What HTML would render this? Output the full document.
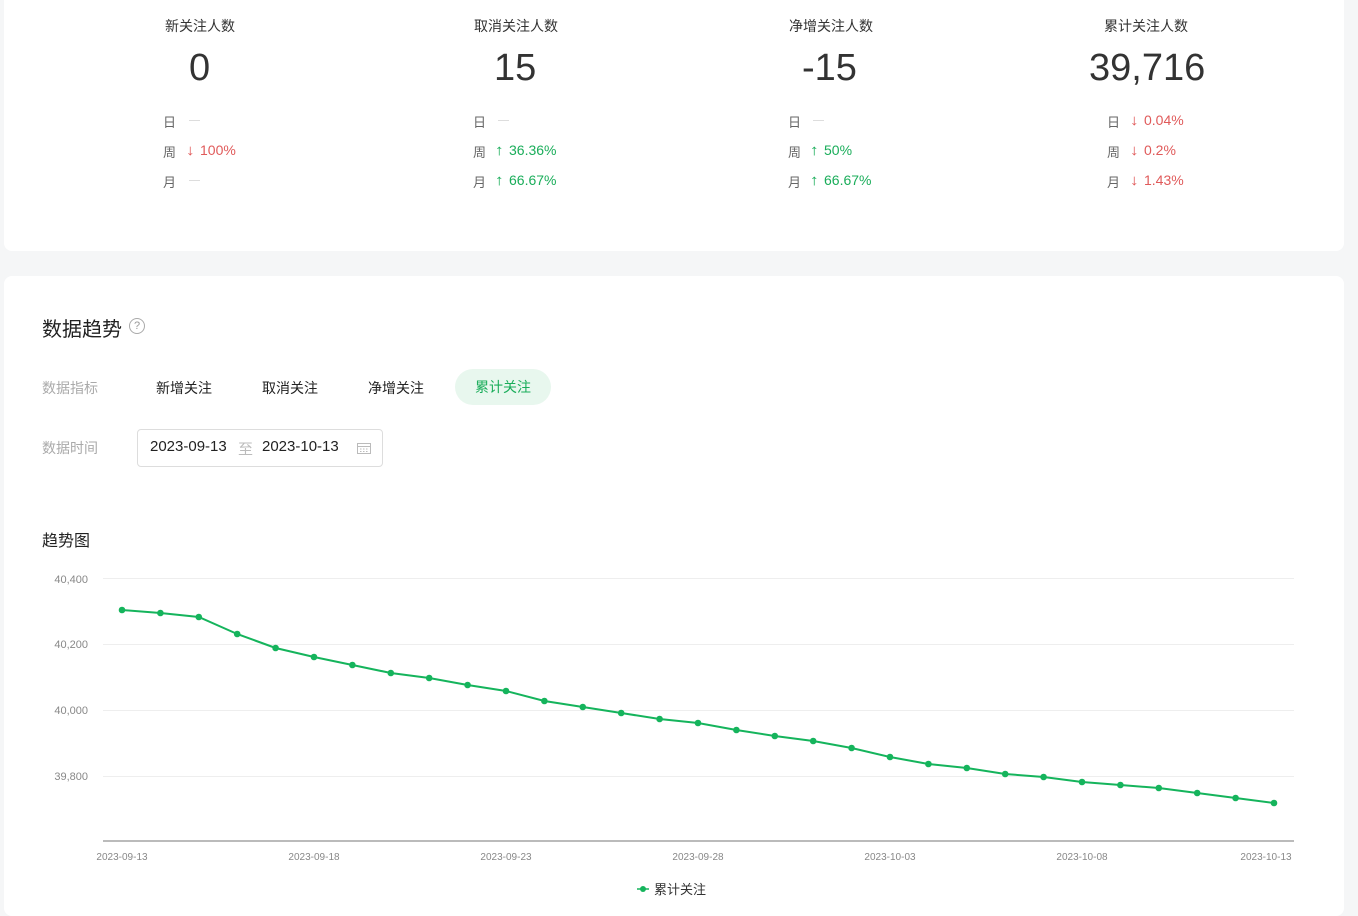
<!DOCTYPE html>
<html><head><meta charset="utf-8">
<style>
*{margin:0;padding:0;box-sizing:border-box}
body{width:1358px;height:905px;background:#f5f6f7;font-family:"Liberation Sans","Noto Sans CJK SC",sans-serif;position:relative;overflow:hidden;color:#333}
.card{position:absolute;background:#fff;border-radius:8px}
.a{position:absolute;white-space:nowrap}
.t{font-size:14px;color:#333}
.n{font-size:38px;color:#333;font-family:"Liberation Sans","DejaVu Sans",sans-serif;font-weight:300}
.l{font-size:13px;color:#666}
.dash{display:inline-block;width:11px;height:1px;background:#ddd;vertical-align:middle}
.r{color:#e05a5a;font-size:14px}
.g{color:#1aad5a;font-size:14px}
.ar{display:inline-block;width:13px;font-size:15px;transform:scaleX(1.2)}
.lab{font-size:14px;color:#aaa}
.tab{font-size:14px;color:#222}
</style></head><body>
<div class="card" style="left:4px;top:-10px;width:1340px;height:261px"></div>
<div class="card" style="left:4px;top:276px;width:1340px;height:640px"></div>

<div class="a t" style="left:165px;top:16px">新关注人数</div>
<div class="a n" style="left:189px;top:47px">0</div>
<div class="a l" style="left:163px;top:112px">日</div><div class="a" style="left:189px;top:112px"><span class="dash"></span></div>
<div class="a l" style="left:163px;top:142px">周</div><div class="a r" style="left:187px;top:142px"><span class="ar">↓</span>100%</div>
<div class="a l" style="left:163px;top:172px">月</div><div class="a" style="left:189px;top:172px"><span class="dash"></span></div>

<div class="a t" style="left:474px;top:16px">取消关注人数</div>
<div class="a n" style="left:494px;top:47px">15</div>
<div class="a l" style="left:473px;top:112px">日</div><div class="a" style="left:498px;top:112px"><span class="dash"></span></div>
<div class="a l" style="left:473px;top:142px">周</div><div class="a g" style="left:496px;top:142px"><span class="ar">↑</span>36.36%</div>
<div class="a l" style="left:473px;top:172px">月</div><div class="a g" style="left:496px;top:172px"><span class="ar">↑</span>66.67%</div>

<div class="a t" style="left:789px;top:16px">净增关注人数</div>
<div class="a n" style="left:802px;top:47px">-15</div>
<div class="a l" style="left:788px;top:112px">日</div><div class="a" style="left:813px;top:112px"><span class="dash"></span></div>
<div class="a l" style="left:788px;top:142px">周</div><div class="a g" style="left:811px;top:142px"><span class="ar">↑</span>50%</div>
<div class="a l" style="left:788px;top:172px">月</div><div class="a g" style="left:811px;top:172px"><span class="ar">↑</span>66.67%</div>

<div class="a t" style="left:1104px;top:16px">累计关注人数</div>
<div class="a n" style="left:1089px;top:47px">39,716</div>
<div class="a l" style="left:1107px;top:112px">日</div><div class="a r" style="left:1131px;top:112px"><span class="ar">↓</span>0.04%</div>
<div class="a l" style="left:1107px;top:142px">周</div><div class="a r" style="left:1131px;top:142px"><span class="ar">↓</span>0.2%</div>
<div class="a l" style="left:1107px;top:172px">月</div><div class="a r" style="left:1131px;top:172px"><span class="ar">↓</span>1.43%</div>

<div class="a" style="left:42px;top:313px;font-size:20px;color:#222">数据趋势</div>
<div class="a" style="left:129px;top:318px;width:16px;height:16px;border:1px solid #aaa;border-radius:50%;font-size:11px;color:#999;text-align:center;line-height:14px">?</div>

<div class="a lab" style="left:42px;top:378px">数据指标</div>
<div class="a tab" style="left:156px;top:378px">新增关注</div>
<div class="a tab" style="left:262px;top:378px">取消关注</div>
<div class="a tab" style="left:368px;top:378px">净增关注</div>
<div class="a" style="left:455px;top:369px;width:96px;height:36px;border-radius:18px;background:#e8f7ee;color:#1aad5a;font-size:14px;text-align:center;line-height:36px">累计关注</div>

<div class="a lab" style="left:42px;top:438px">数据时间</div>
<div class="a" style="left:137px;top:429px;width:246px;height:38px;border:1px solid #ddd;border-radius:4px"></div>
<div class="a" style="left:150px;top:438px;font-size:15px;color:#222">2023-09-13</div>
<div class="a" style="left:238px;top:438px;font-size:15px;color:#bbb">至</div>
<div class="a" style="left:262px;top:438px;font-size:15px;color:#222">2023-10-13</div>
<svg class="a" style="left:356px;top:441px" width="16" height="14" viewBox="0 0 16 14"><rect x="1.5" y="2.5" width="13" height="10" fill="none" stroke="#bbb"/><line x1="1.5" y1="5.5" x2="14.5" y2="5.5" stroke="#bbb"/><g fill="#bbb"><rect x="4" y="7.5" width="1.5" height="1"/><rect x="7" y="7.5" width="1.5" height="1"/><rect x="10" y="7.5" width="1.5" height="1"/><rect x="4" y="10" width="1.5" height="1"/><rect x="7" y="10" width="1.5" height="1"/><rect x="10" y="10" width="1.5" height="1"/></g></svg>

<div class="a" style="left:42px;top:527px;font-size:16px;color:#222">趋势图</div>

<svg class="a" style="left:0;top:0" width="1358" height="905">
<g font-family="Liberation Sans,sans-serif" font-size="11" fill="#888" text-anchor="end">
<text x="88" y="583">40,400</text><text x="88" y="648">40,200</text><text x="88" y="714">40,000</text><text x="88" y="780">39,800</text>
</g>
<g stroke="#eee" stroke-width="1"><line x1="103" y1="578.5" x2="1294" y2="578.5"/><line x1="103" y1="644.5" x2="1294" y2="644.5"/><line x1="103" y1="710.5" x2="1294" y2="710.5"/><line x1="103" y1="776.5" x2="1294" y2="776.5"/></g>
<line x1="103" y1="841" x2="1294" y2="841" stroke="#bbb" stroke-width="2"/>
<g font-family="Liberation Sans,sans-serif" font-size="10" fill="#888" text-anchor="middle">
<text x="122" y="860">2023-09-13</text><text x="314" y="860">2023-09-18</text><text x="506" y="860">2023-09-23</text><text x="698" y="860">2023-09-28</text><text x="890" y="860">2023-10-03</text><text x="1082" y="860">2023-10-08</text><text x="1266" y="860">2023-10-13</text>
</g>
<polyline fill="none" stroke="#15b45c" stroke-width="2" points="122,610 160.4,613 198.8,617 237.2,634 275.6,648 314,657 352.4,665 390.8,673 429.2,678 467.6,685 506,691 544.4,701 582.8,707 621.2,713 659.6,719 698,723 736.4,730 774.8,736 813.2,741 851.6,748 890,757 928.4,764 966.8,768 1005.2,774 1043.6,777 1082,782 1120.4,785 1158.8,788 1197.2,793 1235.6,798 1274,803"/>
<g fill="#15b45c">
<circle cx="122" cy="610" r="3.3"/><circle cx="160.4" cy="613" r="3.3"/><circle cx="198.8" cy="617" r="3.3"/><circle cx="237.2" cy="634" r="3.3"/><circle cx="275.6" cy="648" r="3.3"/><circle cx="314" cy="657" r="3.3"/><circle cx="352.4" cy="665" r="3.3"/><circle cx="390.8" cy="673" r="3.3"/><circle cx="429.2" cy="678" r="3.3"/><circle cx="467.6" cy="685" r="3.3"/><circle cx="506" cy="691" r="3.3"/><circle cx="544.4" cy="701" r="3.3"/><circle cx="582.8" cy="707" r="3.3"/><circle cx="621.2" cy="713" r="3.3"/><circle cx="659.6" cy="719" r="3.3"/><circle cx="698" cy="723" r="3.3"/><circle cx="736.4" cy="730" r="3.3"/><circle cx="774.8" cy="736" r="3.3"/><circle cx="813.2" cy="741" r="3.3"/><circle cx="851.6" cy="748" r="3.3"/><circle cx="890" cy="757" r="3.3"/><circle cx="928.4" cy="764" r="3.3"/><circle cx="966.8" cy="768" r="3.3"/><circle cx="1005.2" cy="774" r="3.3"/><circle cx="1043.6" cy="777" r="3.3"/><circle cx="1082" cy="782" r="3.3"/><circle cx="1120.4" cy="785" r="3.3"/><circle cx="1158.8" cy="788" r="3.3"/><circle cx="1197.2" cy="793" r="3.3"/><circle cx="1235.6" cy="798" r="3.3"/><circle cx="1274" cy="803" r="3.3"/>
</g>
<line x1="637" y1="889" x2="649" y2="889" stroke="#15b45c" stroke-width="1.5"/><circle cx="643" cy="889" r="3" fill="#15b45c"/>
<text x="654" y="894" font-family="Liberation Sans,Noto Sans CJK SC,sans-serif" font-size="13" fill="#333">累计关注</text>
</svg>
</body></html>
